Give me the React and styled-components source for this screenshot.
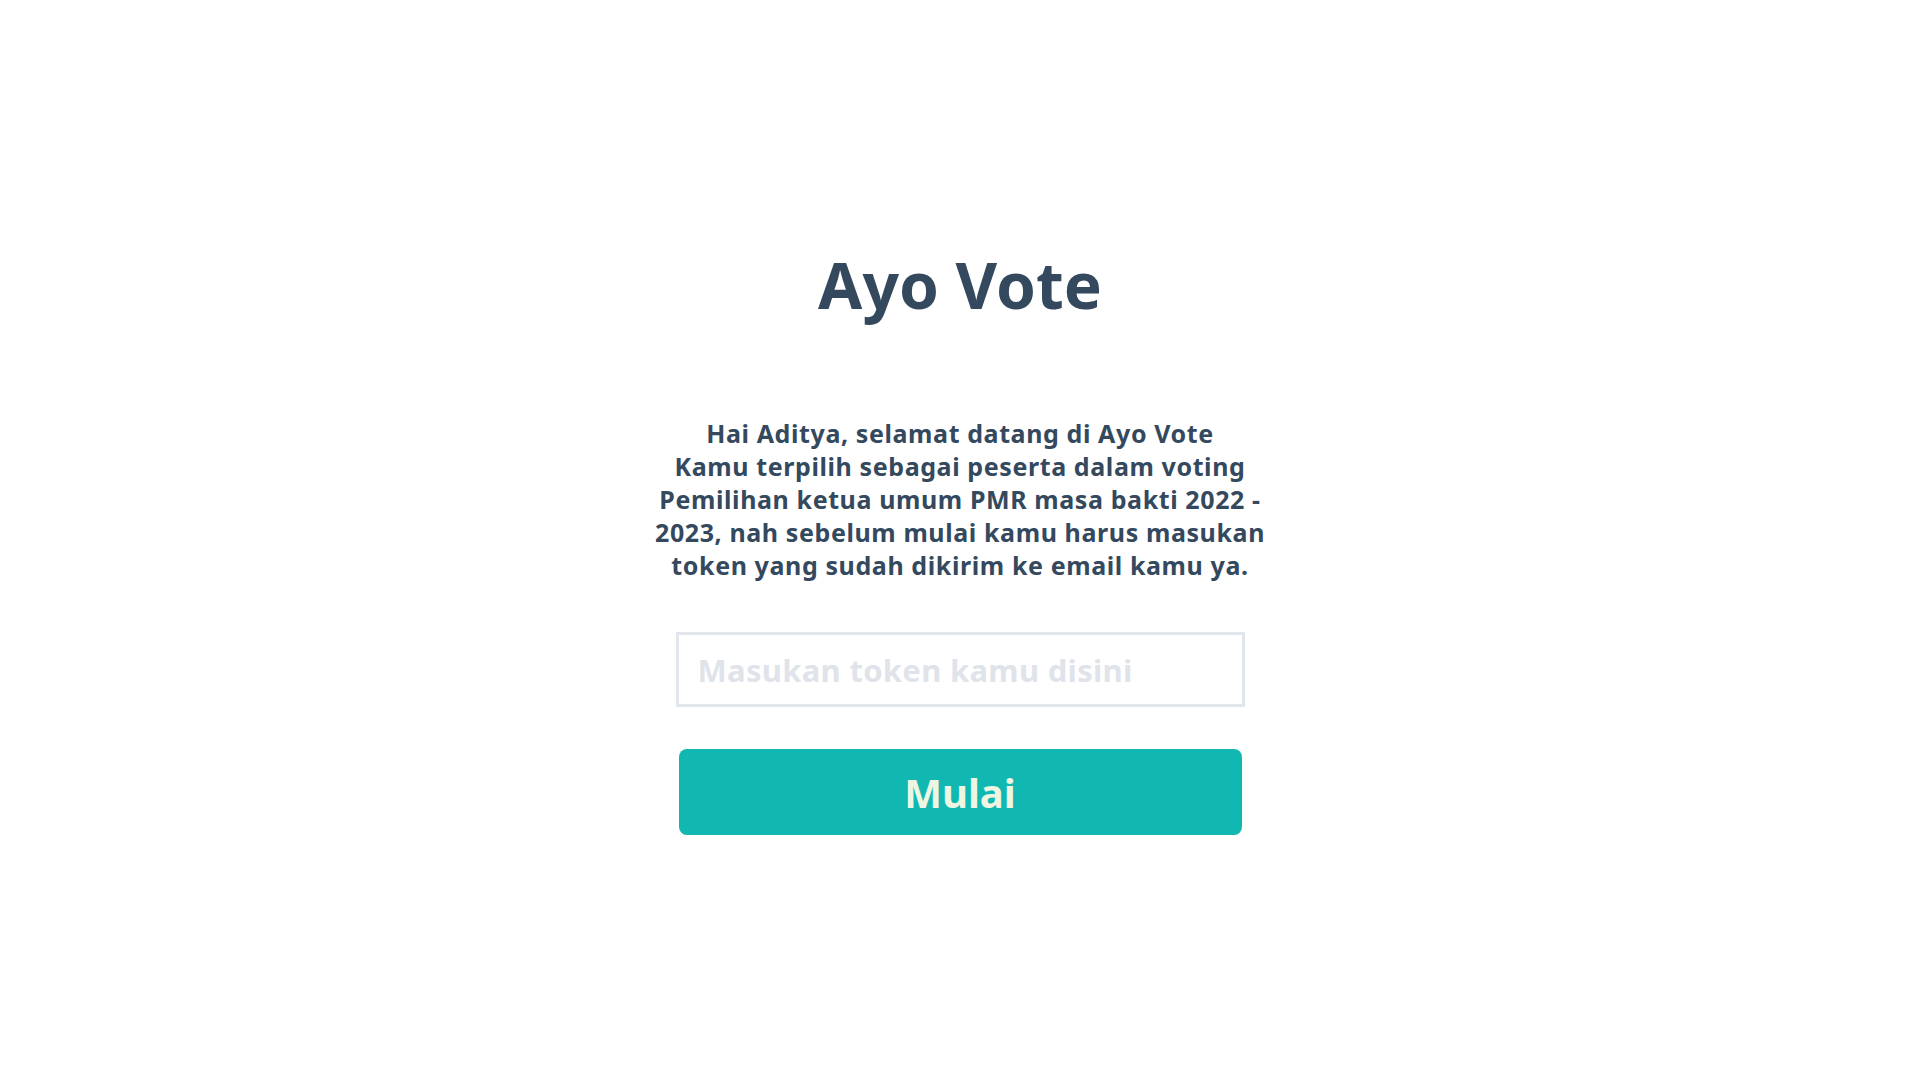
import React from 'react';
import styled, { createGlobalStyle } from 'styled-components';

const GlobalStyle = createGlobalStyle`
  * {
    box-sizing: border-box;
  }
  body {
    margin: 0;
    background: #ffffff;
    font-family: 'Noto Sans', 'Open Sans', sans-serif;
  }
`;

const App = () => {
  return (
    <>
      <GlobalStyle />
      <PageWrapper>
        <Card>
          <Title>Ayo Vote</Title>
          <Intro>
            Hai Aditya, selamat datang di Ayo Vote
            <br />
            Kamu terpilih sebagai peserta dalam voting Pemilihan ketua umum PMR
            masa bakti 2022 - 2023, nah sebelum mulai kamu harus masukan token
            yang sudah dikirim ke email kamu ya.
          </Intro>
          <TokenInput type='text' placeholder='Masukan token kamu disini' />
          <StartButton type='button'>Mulai</StartButton>
        </Card>
      </PageWrapper>
    </>
  );
};

const PageWrapper = styled.div`
  min-height: 100vh;
  display: flex;
  justify-content: center;
  padding-top: 243px;
`;

const Card = styled.div`
  width: 570px;
  display: flex;
  flex-direction: column;
  align-items: center;
`;

const Title = styled.h1`
  margin: 0;
  font-size: 64px;
  line-height: 84px;
  font-weight: 700;
  color: #34495e;
`;

const Intro = styled.p`
  width: 620px;
  margin: 90px 0 0;
  font-size: 25px;
  line-height: 33px;
  letter-spacing: 0.6px;
  font-weight: 700;
  color: #34495e;
  text-align: center;
`;

const TokenInput = styled.input`
  width: 569px;
  height: 75px;
  margin-top: 50px;
  padding: 0 19px;
  border: 3px solid #e1e5ec;
  border-radius: 0;
  outline: none;
  font-family: 'Noto Sans', 'Open Sans', sans-serif;
  font-size: 31px;
  letter-spacing: 0.3px;
  font-weight: 700;
  color: #34495e;
  &::placeholder {
    color: #dfe3ea;
  }
`;

const StartButton = styled.button`
  width: 563px;
  height: 86px;
  margin-top: 42px;
  border: none;
  border-radius: 8px;
  background: #11b8b2;
  color: #eef5e1;
  font-family: 'Noto Sans', 'Open Sans', sans-serif;
  font-size: 40px;
  font-weight: 700;
  cursor: pointer;
`;

export default App;
